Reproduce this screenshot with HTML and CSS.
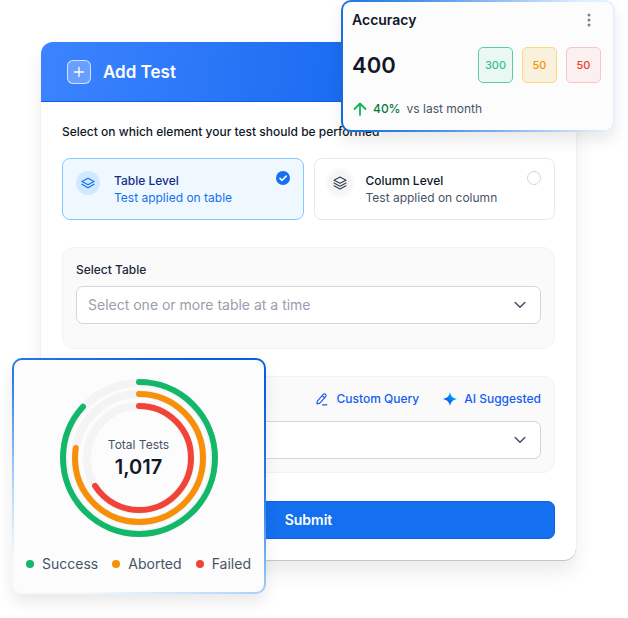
FILE: index.html
```html
<!DOCTYPE html>
<html lang="en">
<head>
<meta charset="utf-8">
<meta name="viewport" content="width=device-width, initial-scale=1">
<title>Add Test</title>
<link rel="stylesheet" href="styles.css">
</head>
<body>
<main class="stage">
  <form class="dialog">
    <header class="dialog-header">
      <span class="plus-badge">
        <svg width="12" height="12" viewBox="0 0 12 12" fill="none" stroke="currentColor" stroke-width="1.3" stroke-linecap="round"><path d="M6 1.5v9M1.5 6h9"/></svg>
      </span>
      <h1 class="dialog-title">Add Test</h1>
    </header>
    <div class="dialog-body">
      <fieldset class="levels">
        <legend class="prompt">Select on which element your test should be performed</legend>
        <div class="level-grid">
          <label class="level level-active" for="level-table">
            <span class="level-icon">
              <svg width="14" height="14" viewBox="0 0 14 14" fill="none" stroke="currentColor" stroke-width="1.2" stroke-linecap="round" stroke-linejoin="round"><path d="M7 2.2 13 5.5 7 8.7 1 5.5z"/><path d="m1 8.2 6 3.5 6-3.5"/></svg>
            </span>
            <span class="level-text"><span class="level-name">Table Level</span><span class="level-note">Test applied on table</span></span>
            <input class="level-radio" type="radio" name="level" id="level-table" checked>
          </label>
          <label class="level" for="level-column">
            <span class="level-icon">
              <svg width="14" height="14" viewBox="0 0 14 14" fill="none" stroke="currentColor" stroke-width="1.1" stroke-linecap="round" stroke-linejoin="round"><path d="M7 1 13 4.2 7 7.3 1 4.2z"/><path d="m1 7 6 3.2L13 7M1 9.8 7 13l6-3.2"/></svg>
            </span>
            <span class="level-text"><span class="level-name">Column Level</span><span class="level-note">Test applied on column</span></span>
            <input class="level-radio" type="radio" name="level" id="level-column">
          </label>
        </div>
      </fieldset>

      <section class="panel">
        <label class="field-label" for="table-select">Select Table</label>
        <div class="select-wrap">
          <select class="select" id="table-select"><option>Select one or more table at a time</option></select>
          <svg class="chevron" width="12" height="8" viewBox="0 0 12 8" fill="none" stroke="currentColor" stroke-width="1.5" stroke-linecap="round" stroke-linejoin="round"><path d="m1.2 1.5 4.8 4.8 4.8-4.8"/></svg>
        </div>
      </section>

      <section class="panel panel-test">
        <div class="actions">
          <button class="action" type="button">
            <svg width="14" height="14" viewBox="0 0 14 14" fill="none" stroke="currentColor" stroke-width="1.2" stroke-linecap="round" stroke-linejoin="round"><path d="M2.3 9.2 8.3 2.4c.7-.7 1.600-.7 2.300-.1.7.7.7 1.500.1 2.300L4.800 11.200 2 12z"/><path d="m7.300 3.600 2.300 2.100M7.500 12.800h4.300"/></svg>
            Custom Query
          </button>
          <button class="action" type="button">
            <svg width="14" height="14" viewBox="0 0 14 14"><defs><linearGradient id="spark" x1="1" y1="0" x2="0" y2="1"><stop offset="0.3" stop-color="#00a6f8"/><stop offset="0.7" stop-color="#0757e6"/></linearGradient></defs><path fill="url(#spark)" d="M7 0c.9 4 2.500 6 7 7-4.500 1-6.100 3-7 7-.9-4-2.500-6-7-7 4.500-1 6.100-3 7-7z"/></svg>
            AI Suggested
          </button>
        </div>
        <div class="select-wrap">
          <select class="select" aria-label="Test"><option></option></select>
          <svg class="chevron" width="12" height="8" viewBox="0 0 12 8" fill="none" stroke="currentColor" stroke-width="1.5" stroke-linecap="round" stroke-linejoin="round"><path d="m1.2 1.5 4.8 4.8 4.8-4.8"/></svg>
        </div>
      </section>

      <button class="submit" type="submit">Submit</button>
    </div>
  </form>

  <aside class="card accuracy">
    <div class="card-head">
      <h2 class="card-title">Accuracy</h2>
      <button class="menu" type="button" aria-label="More options">
        <svg width="4" height="14" viewBox="0 0 4 14" fill="currentColor"><circle cx="2" cy="2" r="1.5"/><circle cx="2" cy="7" r="1.5"/><circle cx="2" cy="12" r="1.5"/></svg>
      </button>
    </div>
    <div class="card-row">
      <strong class="score">400</strong>
      <div class="tiles">
        <span class="tile tile-green">300</span>
        <span class="tile tile-amber">50</span>
        <span class="tile tile-red">50</span>
      </div>
    </div>
    <p class="trend">
      <svg width="14" height="14" viewBox="0 0 14 14" fill="none" stroke="#12b557" stroke-width="1.8" stroke-linecap="round" stroke-linejoin="round"><path d="M7 13V1.5M1.500 7 7 1.500 12.500 7"/></svg>
      <span class="trend-value">40%</span>
      <span>vs last month</span>
    </p>
  </aside>

  <aside class="card totals">
    <div class="donut">
      <svg width="160" height="160" viewBox="0 0 160 160" fill="none" stroke-linecap="round">
        <g stroke="#f4f4f5" stroke-width="8"><circle cx="80" cy="80" r="75"/><circle cx="80" cy="80" r="64"/><circle cx="80" cy="80" r="52"/></g>
        <g stroke-width="6" transform="rotate(-90 80 80)">
          <circle cx="80" cy="80" r="76" stroke="#12b76a" pathLength="1000" stroke-dasharray="868 1000"/>
          <circle cx="80" cy="80" r="64" stroke="#f79009" pathLength="1000" stroke-dasharray="775 1000"/>
          <circle cx="80" cy="80" r="52" stroke="#f04438" pathLength="1000" stroke-dasharray="660 1000"/>
        </g>
      </svg>
      <div class="donut-text"><span class="donut-label">Total Tests</span><strong class="donut-value">1,017</strong></div>
    </div>
    <ul class="legend">
      <li class="legend-item success">Success</li>
      <li class="legend-item aborted">Aborted</li>
      <li class="legend-item failed">Failed</li>
    </ul>
  </aside>
</main>
</body>
</html>
```
FILE: styles.css
```css
* { box-sizing: border-box; }
body {
  margin: 0;
  background: #fff;
  color: #101828;
  font: 12px/18px Inter, "Liberation Sans", sans-serif;
}
h1, h2, p, ul, fieldset, legend { margin: 0; padding: 0; border: 0; }
button, select { font: inherit; }
svg { display: block; flex: none; }

.stage { position: relative; padding: 42px 52px 58px 41px; }

.dialog {
  border-radius: 12px;
  background: #fff;
  box-shadow: 0 0 1px rgba(0, 0, 0, .2), 0 1px 0 rgba(0, 0, 0, .15), 0 12px 20px rgba(0, 0, 0, .08);
}
.dialog-header {
  display: flex;
  align-items: center;
  gap: 12px;
  height: 60px;
  padding: 0 26px;
  border-radius: 12px 12px 0 0;
  border-bottom: 1px solid #0b5cf0;
  background: linear-gradient(100deg, #3c84ff, #1a6bf0 60%, #1569ee);
  color: #fff;
}
.plus-badge {
  display: grid;
  place-items: center;
  width: 24px;
  height: 24px;
  border: 1px solid rgba(255, 255, 255, .7);
  border-radius: 6px;
  background: rgba(255, 255, 255, .25);
}
.dialog-title { font-size: 17px; line-height: 24px; font-weight: 600; }
.dialog-body { padding: 21px; }

.prompt { font-weight: 500; }
.level-grid { display: grid; grid-template-columns: 1fr 1fr; gap: 10px; padding-top: 17px; }
.level {
  display: flex;
  align-items: flex-start;
  gap: 14px;
  height: 62px;
  padding: 12px 13px;
  border: 1px solid #e8e8ea;
  border-radius: 8px;
}
.level-icon {
  display: grid;
  place-items: center;
  width: 24px;
  height: 24px;
  border-radius: 50%;
  background: #f5f5f6;
  box-shadow: 0 0 0 3px #fafafa;
  color: #344054;
}
.level-text { display: grid; flex: 1; line-height: 17px; padding-top: 1px; }
.level-name { font-weight: 500; }
.level-note { color: #475467; }
.level-radio {
  appearance: none;
  width: 14px;
  height: 14px;
  margin: 0;
  border: 1px solid #d0d5dd;
  border-radius: 50%;
}
.level-radio:checked {
  border: 0;
  background: #1570ef url("data:image/svg+xml,%3Csvg xmlns='http://www.w3.org/2000/svg' viewBox='0 0 14 14' fill='none' stroke='white' stroke-width='1.6' stroke-linecap='round' stroke-linejoin='round'%3E%3Cpath d='M4 7.300 6.100 9.300 10.200 5.100'/%3E%3C/svg%3E") center / 14px no-repeat;
}
.level-active { border-color: #84caff; background: #eff8ff; }
.level-active .level-icon { background: #d1e9ff; box-shadow: none; color: #1570ef; }
.level-active .level-name { color: #132f8c; }
.level-active .level-note { color: #1570ef; }

.panel {
  margin-top: 27px;
  padding: 13px 13px 24px;
  border: 1px solid #f2f3f5;
  border-radius: 12px;
  background: #fafafa;
}
.panel-test { padding-bottom: 13px; }
.field-label { display: block; margin-bottom: 7px; font-weight: 500; color: #1d2939; }
.select-wrap { display: grid; align-items: center; }
.select-wrap > * { grid-area: 1 / 1; }
.select {
  appearance: none;
  width: 100%;
  height: 38px;
  padding: 0 36px 0 11px;
  border: 1px solid #d5d6d9;
  border-radius: 7px;
  background: #fff;
  color: #98a0ad;
  font-size: 14px;
}
.chevron { justify-self: end; margin-right: 15px; color: #475067; pointer-events: none; }
.actions { display: flex; justify-content: flex-end; gap: 24px; margin-bottom: 13px; }
.action {
  display: flex;
  align-items: center;
  gap: 7px;
  padding: 0;
  border: 0;
  background: none;
  color: #155eef;
  font-weight: 500;
}
.submit {
  display: block;
  width: 100%;
  height: 38px;
  margin-top: 28px;
  border: 1px solid #0b62ee;
  border-radius: 7px;
  background: #1570ef;
  color: #fff;
  font-size: 14px;
  font-weight: 600;
}

.card { position: absolute; border: 2px solid transparent; border-radius: 10px; }
.accuracy {
  top: 0;
  right: 13px;
  width: 274px;
  padding: 8px 12px 12px 9px;
  background: linear-gradient(#fcfcfd, #fcfcfd) padding-box, linear-gradient(80deg, #1068dc, #4c93ea 35%, #e4f0ff 90%) border-box;
  box-shadow: 0 8px 16px rgba(0, 0, 0, .09);
}
.card-head { display: flex; justify-content: space-between; align-items: center; }
.card-title { font-size: 14px; line-height: 20px; font-weight: 600; }
.menu { padding: 0; margin-right: 10px; border: 0; background: none; color: #7b8190; }
.card-row { display: flex; justify-content: space-between; align-items: center; margin-top: 17px; }
.score { font-size: 22px; line-height: 28px; font-weight: 600; }
.tiles { display: flex; gap: 9px; }
.tile {
  display: grid;
  place-items: center;
  width: 35px;
  height: 36px;
  border: 1px solid;
  border-radius: 5px;
  font-size: 11px;
  font-weight: 500;
}
.tile-green { border-color: #59cda3; background: #e9f8f3; color: #3cc08f; }
.tile-amber { border-color: #fcd97c; background: #faf1dc; color: #f79009; }
.tile-red { border-color: #fcc5c5; background: #faf0f0; color: #ee3b30; }
.trend { display: flex; align-items: center; gap: 6px; margin-top: 17px; padding-left: 1px; color: #475467; }
.trend-value { color: #067a41; font-weight: 500; }

.totals {
  top: 358px;
  left: 12px;
  width: 254px;
  padding: 18px 13px 18px 12px;
  background: linear-gradient(#fcfcfd, #fcfcfd) padding-box, linear-gradient(205deg, #0860e0 10%, #2e7fe8 40%, #b5d8fb 70%, #f5faff 90%) border-box;
  box-shadow: 0 8px 16px rgba(0, 0, 0, .09);
}
.donut { display: grid; place-items: center; }
.donut > * { grid-area: 1 / 1; }
.donut-text { display: grid; justify-items: center; }
.donut-label { color: #475467; }
.donut-value { font-size: 20px; line-height: 26px; font-weight: 600; }
.legend { display: flex; justify-content: space-between; margin-top: 16px; list-style: none; color: #475467; font-size: 14px; line-height: 20px; }
.legend-item { display: flex; align-items: center; gap: 8px; }
.legend-item::before { content: ""; width: 8px; height: 8px; border-radius: 50%; }
.success::before { background: #12b76a; }
.aborted::before { background: #f79009; }
.failed::before { background: #f04438; }
```
